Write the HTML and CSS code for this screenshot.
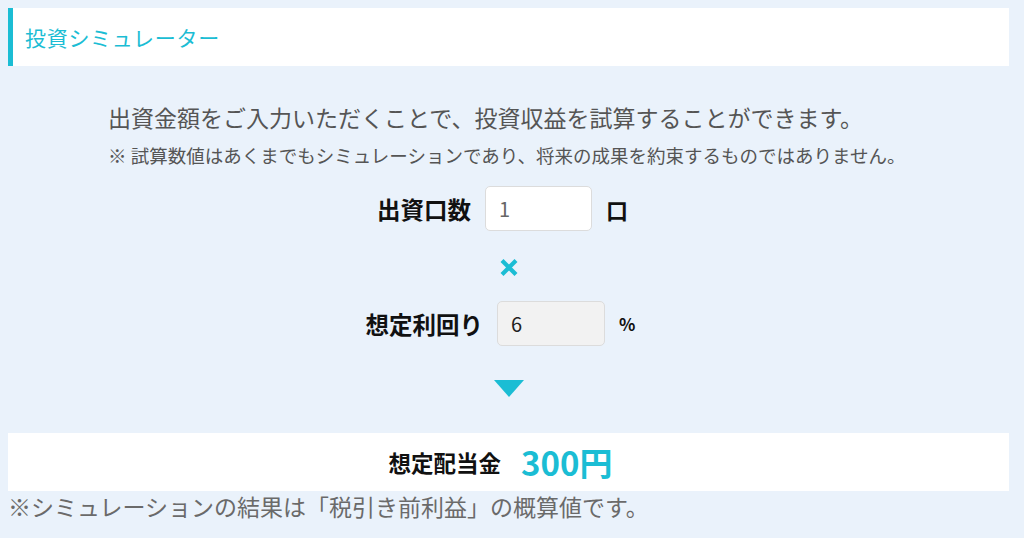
FILE: index.html
```html
<!DOCTYPE html>
<html lang="ja">
<head>
    <meta charset="UTF-8">
    <meta name="viewport" content="width=device-width, initial-scale=1.0">
    <title>投資シミュレーター</title>
    <link rel="stylesheet" href="styles.css">
</head>
<body>

<div class="sim">
    <div class="sim-head">
        <h2>投資シミュレーター</h2>
    </div>

    <div class="sim-body">
        <div class="intro">
            <p class="lead">出資金額をご入力いただくことで、投資収益を試算することができます。</p>
            <p class="note">※ 試算数値はあくまでもシミュレーションであり、将来の成果を約束するものではありません。</p>
        </div>

        <div class="row">
            <label for="kuchi">出資口数</label>
            <input type="text" id="kuchi" class="num" value="1">
            <span class="unit">口</span>
        </div>

        <div class="times">
            <svg width="20" height="19" viewBox="0 0 20 19">
                <path d="M3 2.5 L17 16.5 M17 2.5 L3 16.5" stroke="#1bbdd4" stroke-width="4.2" stroke-linecap="butt"/>
            </svg>
        </div>

        <div class="row row-rate">
            <label for="rimawari">想定利回り</label>
            <input type="text" id="rimawari" class="num readonly" value="6" readonly>
            <span class="unit unit-small">%</span>
        </div>

        <div class="arrow"></div>
    </div>

    <div class="result">
        <span class="result-label">想定配当金</span>
        <span class="result-value">300円</span>
    </div>
    <p class="foot">※シミュレーションの結果は「税引き前利益」の概算値です。</p>
</div>

</body>
</html>
```

FILE: styles.css
```css
body {
    margin: 0;
    padding: 8px 15px 0 8px;
    background-color: #eaf2fb;
    font-family: "Noto Sans CJK JP", "Noto Sans", sans-serif;
    color: #333;
}

.sim-head {
    background-color: white;
    border-left: 5px solid #1bbdd4;
    height: 58px;
    display: flex;
    align-items: center;
    padding-left: 12px;
}
.sim-head h2 {
    margin: 0;
    font-size: 21px;
    font-weight: normal;
    color: #1bbdd4;
    letter-spacing: 0.7px;
}

.sim-body {
    display: flex;
    flex-direction: column;
    align-items: center;
}

.intro {
    align-self: stretch;
    padding-left: 100px;
    margin-top: 34px;
}
.lead {
    margin: 0;
    font-size: 23px;
    line-height: 34px;
    color: #555;
}
.note {
    margin: 8px 0 0;
    font-size: 18.5px;
    line-height: 26px;
    color: #555;
}

.row {
    display: flex;
    align-items: center;
    gap: 14px;
    margin-top: 18px;
    padding-right: 12px;
}
.row label {
    font-size: 23.5px;
    font-weight: bold;
    color: #111;
}
.num {
    box-sizing: border-box;
    width: 107px;
    height: 45px;
    padding: 0 13px;
    border: 1px solid #dcdcdc;
    border-radius: 5px;
    background-color: white;
    font-family: "Noto Sans CJK JP", "Noto Sans", sans-serif;
    font-size: 20px;
    color: #666;
}
.num.readonly {
    width: 108px;
    background-color: #f2f2f2;
    color: #222;
}
.unit {
    font-size: 22px;
    font-weight: bold;
    color: #111;
}
.unit-small {
    font-size: 17px;
}

.times {
    margin-top: 27px;
    height: 19px;
}
.times svg {
    display: block;
}

.row-rate {
    margin-top: 24px;
    padding-right: 16px;
}

.arrow {
    margin-top: 34px;
    width: 0;
    height: 0;
    border-left: 15px solid transparent;
    border-right: 15px solid transparent;
    border-top: 17px solid #1bbdd4;
}

.result {
    margin-top: 36px;
    height: 58px;
    padding-right: 16px;
    background-color: white;
    display: flex;
    justify-content: center;
    align-items: center;
    gap: 20px;
}
.result-label {
    font-size: 22.5px;
    font-weight: bold;
    color: #111;
}
.result-value {
    font-size: 33px;
    font-weight: bold;
    color: #1bbdd4;
}

.foot {
    margin: 0;
    font-size: 23px;
    line-height: 30px;
    color: #6a6a6a;
}
```
